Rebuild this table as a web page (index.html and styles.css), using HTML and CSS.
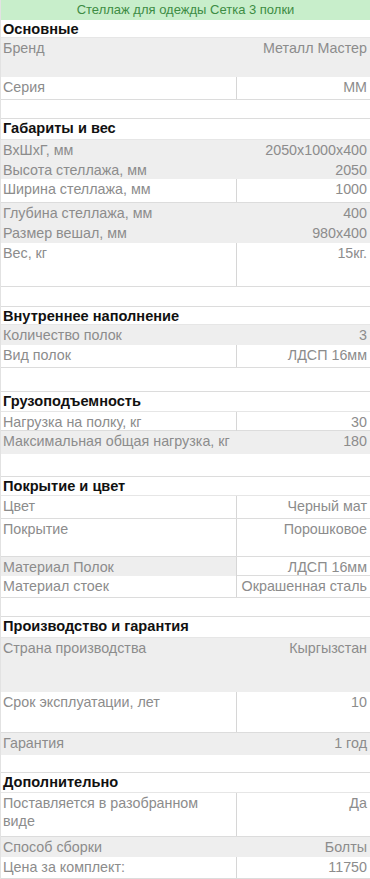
FILE: index.html
```html
<!DOCTYPE html>
<html lang="ru">
<head>
<meta charset="utf-8">
<title>Стеллаж для одежды Сетка 3 полки</title>
<link rel="stylesheet" href="styles.css">
</head>
<body>
<div class="sheet">
  <div class="title">Стеллаж для одежды Сетка 3 полки</div>

  <div class="row head h18">Основные</div>
  <div class="row gray h39"><div class="k">Бренд</div><div class="v">Металл Мастер</div></div>
  <div class="row white h23"><div class="k">Серия</div><div class="v">ММ</div></div>
  <div class="row empty h19"></div>

  <div class="row head h21">Габариты и вес</div>
  <div class="row gray h20"><div class="k">ВхШхГ, мм</div><div class="v">2050x1000x400</div></div>
  <div class="row gray h19"><div class="k">Высота стеллажа, мм</div><div class="v">2050</div></div>
  <div class="row white h24"><div class="k">Ширина стеллажа, мм</div><div class="v">1000</div></div>
  <div class="row gray h20"><div class="k">Глубина стеллажа, мм</div><div class="v">400</div></div>
  <div class="row gray h20"><div class="k">Размер вешал, мм</div><div class="v">980x400</div></div>
  <div class="row white h44"><div class="k">Вес, кг</div><div class="v">15кг.</div></div>
  <div class="row empty h20"></div>

  <div class="row head h18">Внутреннее наполнение</div>
  <div class="row gray h20"><div class="k">Количество полок</div><div class="v">3</div></div>
  <div class="row white h23"><div class="k">Вид полок</div><div class="v">ЛДСП 16мм</div></div>
  <div class="row empty h24"></div>

  <div class="row head h20">Грузоподъемность</div>
  <div class="row white h19"><div class="k">Нагрузка на полку, кг</div><div class="v">30</div></div>
  <div class="row gray h23"><div class="k">Максимальная общая нагрузка, кг</div><div class="v">180</div></div>
  <div class="row empty h23"></div>

  <div class="row head h19">Покрытие и цвет</div>
  <div class="row white h23"><div class="k">Цвет</div><div class="v">Черный мат</div></div>
  <div class="row white h38"><div class="k">Покрытие</div><div class="v">Порошковое</div></div>
  <div class="row mixed h19"><div class="k">Материал Полок</div><div class="v">ЛДСП 16мм</div></div>
  <div class="row white h22"><div class="k">Материал стоек</div><div class="v">Окрашенная сталь</div></div>
  <div class="row empty h19"></div>

  <div class="row head h21">Производство и гарантия</div>
  <div class="row gray h54"><div class="k">Страна производства</div><div class="v">Кыргызстан</div></div>
  <div class="row white h41"><div class="k">Срок эксплуатации, лет</div><div class="v">10</div></div>
  <div class="row gray h22"><div class="k">Гарантия</div><div class="v">1 год</div></div>
  <div class="row empty h18"></div>

  <div class="row head h20">Дополнительно</div>
  <div class="row white h44"><div class="k">Поставляется в разобранном<br>виде</div><div class="v">Да</div></div>
  <div class="row gray h20"><div class="k">Способ сборки</div><div class="v">Болты</div></div>
  <div class="row white h22"><div class="k">Цена за комплект:</div><div class="v">11750</div></div>
</div>
</body>
</html>
```

FILE: styles.css
```css
* { box-sizing: border-box; }

html, body {
  margin: 0;
  padding: 0;
  background: #ffffff;
}

body {
  font-family: "Liberation Sans", Arial, sans-serif;
  font-size: 14.3px;
  color: #8c8c8c;
}

.sheet {
  width: 370px;
  border-left: 1px solid #e2e2e2;
  overflow: hidden;
}

.title {
  height: 20px;
  background: #c8eecb;
  color: #3d8c44;
  font-size: 13px;
  line-height: 20px;
  text-align: center;
}

.row {
  display: grid;
  grid-template-columns: 235px 1fr;
  border-bottom: 1px solid #dcdcdc;
  line-height: 18px;
  white-space: nowrap;
}

.row .k {
  padding: 1px 0 0 2px;
}

.row .v {
  padding: 1px 3px 0 0;
  text-align: right;
}

.head {
  display: block;
  padding: 0 0 0 2px;
  color: #111111;
  font-size: 14.6px;
  font-weight: bold;
  border-bottom-color: #e6e6e6;
}

.gray {
  background: #eeeeee;
  border-bottom-color: #eeeeee;
}

.white .v {
  border-left: 1px solid #d6d6d6;
}

.mixed .k {
  background: #eeeeee;
}

.mixed .v {
  border-left: 1px solid #d6d6d6;
}

.h18 { height: 18px; }
.h19 { height: 19px; }
.h20 { height: 20px; }
.h21 { height: 21px; }
.h22 { height: 22px; }
.h23 { height: 23px; }
.h24 { height: 24px; }
.h38 { height: 38px; }
.h39 { height: 39px; }
.h41 { height: 41px; }
.h44 { height: 44px; }
.h54 { height: 54px; }
```
